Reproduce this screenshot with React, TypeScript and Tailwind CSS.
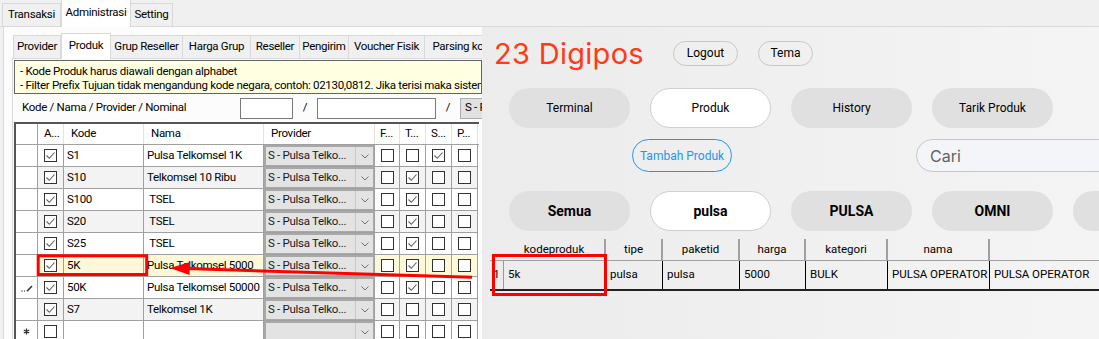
import React from "react";

type Row = {
  kode: string;
  nama: string;
  t?: boolean;
  s?: boolean;
  sel?: boolean;
  edit?: boolean;
};

const rows: Row[] = [
  { kode: "S1", nama: "Pulsa Telkomsel 1K", s: true },
  { kode: "S10", nama: "Telkomsel 10 Ribu", t: true },
  { kode: "S100", nama: " TSEL", t: true },
  { kode: "S20", nama: " TSEL", t: true },
  { kode: "S25", nama: " TSEL", t: true },
  { kode: "5K", nama: "Pulsa Telkomsel 5000", t: true, sel: true },
  { kode: "50K", nama: "Pulsa Telkomsel 50000", t: true, edit: true },
  { kode: "S7", nama: "Telkomsel 1K" },
];

const innerTabs = [
  { label: "Provider", w: "w-[48px]" },
  { label: "Produk", w: "w-[50px]", active: true },
  { label: "Grup Reseller", w: "w-[73px]" },
  { label: "Harga Grup", w: "w-[69px]" },
  { label: "Reseller", w: "w-[50px]" },
  { label: "Pengirim", w: "w-[50px]" },
  { label: "Voucher Fisik", w: "w-[77px]" },
  { label: "Parsing kode", w: "w-[80px]" },
];

function Check({ on }: { on?: boolean }) {
  return (
    <span className="w-[13px] h-[13px] border border-[#333] bg-white flex items-center justify-center">
      {on && (
        <svg width="11" height="11" viewBox="0 0 11 11">
          <path d="M1.5 5.5 L4.3 8.3 L9.5 2.5" fill="none" stroke="#606060" strokeWidth="1.1" />
        </svg>
      )}
    </span>
  );
}

function Chevron() {
  return (
    <svg width="8" height="5" viewBox="0 0 8 5">
      <path d="M0.5 0.5 L4 4 L7.5 0.5" fill="none" stroke="#707070" strokeWidth="1" />
    </svg>
  );
}

function ProviderCell({ text }: { text: string }) {
  return (
    <div className="w-[111px] h-full shrink-0 border-r border-b border-[#a0a0a0] bg-[#a8a8a8] p-[2px] pr-px pb-px">
      <div className="h-full flex bg-[#e3e3e3]">
        <span className="flex-1 pl-[2px] flex items-center whitespace-nowrap overflow-hidden text-[#1a1a1a]">{text}</span>
        <span className="w-[18px] border-l border-[#c8c8c8] flex items-center justify-center">
          <Chevron />
        </span>
      </div>
    </div>
  );
}

function GridRow({ row, i }: { row: Row; i: number }) {
  const bg = row.sel ? "bg-[#fdf9d8]" : i % 2 === 1 ? "bg-[#f3f3f3]" : "bg-white";
  const cell = `h-full shrink-0 border-r border-b border-[#a0a0a0] ${bg}`;
  return (
    <div className="flex h-[22px]">
      <div className="w-[22px] h-full shrink-0 border-r border-b border-[#a0a0a0] bg-white flex items-center justify-center">
        {row.edit && (
          <svg width="14" height="8" viewBox="0 0 14 8">
            <circle cx="2" cy="7" r="0.7" fill="#444" />
            <circle cx="4.5" cy="7" r="0.7" fill="#444" />
            <path d="M7 7.2 L12 2" stroke="#333" strokeWidth="1.6" />
          </svg>
        )}
      </div>
      <div className={`w-[26px] ${cell} flex items-center justify-center`}>
        <Check on />
      </div>
      <div className={`w-[80px] ${cell} ${row.edit ? "bg-white" : ""} pl-[3px] flex items-center`}>{row.kode}</div>
      <div className={`w-[120px] ${cell} pl-[3px] flex items-center whitespace-pre overflow-hidden`}>{row.nama}</div>
      <ProviderCell text="S - Pulsa Telko..." />
      <div className={`w-[25px] ${cell} flex items-center justify-center`}>
        <Check />
      </div>
      <div className={`w-[26px] ${cell} flex items-center justify-center`}>
        <Check on={row.t} />
      </div>
      <div className={`w-[26px] ${cell} flex items-center justify-center`}>
        <Check on={row.s} />
      </div>
      <div className={`w-[26px] ${cell} flex items-center justify-center`}>
        <Check />
      </div>
    </div>
  );
}

function LeftPanel() {
  return (
    <div className="w-[482px] h-full shrink-0 flex flex-col overflow-hidden text-[11.5px] tracking-[-0.3px] text-black font-[Roboto,sans-serif]">
      {/* outer tabs */}
      <div className="h-[27px] flex items-end pl-[2px] border-b border-[#d9d9d9] bg-[#f0f0f0]">
        <div className="w-[59px] h-[23px] border border-b-0 border-[#d9d9d9] flex items-center justify-center">Transaksi</div>
        <div className="w-[70px] h-[28px] -mb-px bg-white border border-b-0 border-[#d9d9d9] flex items-start pt-[4px] justify-center">Administrasi</div>
        <div className="w-[42px] h-[23px] border border-b-0 border-l-0 border-[#d9d9d9] flex items-center justify-center">Setting</div>
      </div>

      <div className="flex-1 ml-[3px] border-l border-[#d9d9d9] bg-[#fcfcfc] pt-[7px] pl-[8px]">
        {/* inner tabs */}
        <div className="h-[25px] flex items-end pl-px border-b border-[#d9d9d9]">
          {innerTabs.map((t) =>
            t.active ? (
              <div key={t.label} className={`${t.w} h-[26px] -mb-px shrink-0 bg-white border border-b-0 border-[#d9d9d9] flex items-start pt-[3px] justify-center`}>
                {t.label}
              </div>
            ) : (
              <div key={t.label} className={`${t.w} h-[23px] shrink-0 bg-[#f0f0f0] border border-b-0 border-[#d9d9d9] -ml-px first:ml-0 flex items-center justify-center whitespace-nowrap overflow-hidden`}>
                {t.label}
              </div>
            )
          )}
        </div>

        <div className="border-l border-[#d9d9d9] pl-px pt-px h-full">
          {/* info box */}
          <div className="h-[34px] border border-[#646464] bg-[#ffffe1] pl-[5px] pt-[3px] leading-[14px] whitespace-nowrap overflow-hidden">
            <div>- Kode Produk harus diawali dengan alphabet</div>
            <div>- Filter Prefix Tujuan tidak mengandung kode negara, contoh: 02130,0812. Jika terisi maka sistem akan</div>
          </div>

          {/* filter row */}
          <div className="mt-[3px] h-[22px] flex items-center overflow-hidden">
            <div className="w-[226px] shrink-0 pl-[8px] whitespace-nowrap">Kode / Nama / Provider / Nominal</div>
            <div className="w-[53px] h-[21px] shrink-0 bg-white border border-[#7a7a7a]" />
            <div className="w-[24px] shrink-0 text-center">/</div>
            <div className="w-[119px] h-[21px] shrink-0 bg-white border border-[#7a7a7a]" />
            <div className="w-[24px] shrink-0 text-center">/</div>
            <div className="w-[60px] h-[21px] shrink-0 bg-[#e1e1e1] border border-[#adadad] pl-[4px] flex items-center whitespace-nowrap">S - Pulsa</div>
          </div>

          {/* grid */}
          <div className="mt-[3px] w-[465px] border-l-2 border-t-2 border-[#555] bg-white">
            <div className="flex h-[21px] border-b border-[#a0a0a0]">
              <div className="w-[22px] shrink-0 border-r border-[#a0a0a0]" />
              <div className="w-[26px] shrink-0 border-r border-[#e3e3e3] pl-[6px] flex items-center">A...</div>
              <div className="w-[80px] shrink-0 border-r border-[#e3e3e3] pl-[7px] flex items-center">Kode</div>
              <div className="w-[120px] shrink-0 border-r border-[#e3e3e3] pl-[7px] flex items-center">Nama</div>
              <div className="w-[111px] shrink-0 border-r border-[#e3e3e3] pl-[7px] flex items-center">Provider</div>
              <div className="w-[25px] shrink-0 border-r border-[#e3e3e3] pl-[5px] flex items-center">F...</div>
              <div className="w-[26px] shrink-0 border-r border-[#e3e3e3] pl-[5px] flex items-center">T...</div>
              <div className="w-[26px] shrink-0 border-r border-[#e3e3e3] pl-[5px] flex items-center">S...</div>
              <div className="w-[26px] shrink-0 border-r border-[#e3e3e3] pl-[5px] flex items-center">P...</div>
            </div>
            {rows.map((r, i) => (
              <GridRow key={r.kode} row={r} i={i} />
            ))}
            {/* new row */}
            <div className="flex h-[22px]">
              <div className="w-[22px] shrink-0 border-r border-b border-[#a0a0a0] flex items-center justify-center">
                <svg width="7" height="7" viewBox="0 0 7 7">
                  <path d="M3.5 0.5 V6.5 M0.8 2 L6.2 5 M0.8 5 L6.2 2" stroke="#333" strokeWidth="1.3" />
                </svg>
              </div>
              <div className="w-[26px] shrink-0 border-r border-b border-[#a0a0a0] flex items-center justify-center">
                <Check />
              </div>
              <div className="w-[80px] shrink-0 border-r border-b border-[#a0a0a0]" />
              <div className="w-[120px] shrink-0 border-r border-b border-[#a0a0a0]" />
              <ProviderCell text="" />
              <div className="w-[25px] shrink-0 border-r border-b border-[#a0a0a0] flex items-center justify-center"><Check /></div>
              <div className="w-[26px] shrink-0 border-r border-b border-[#a0a0a0] flex items-center justify-center"><Check /></div>
              <div className="w-[26px] shrink-0 border-r border-b border-[#a0a0a0] flex items-center justify-center"><Check /></div>
              <div className="w-[26px] shrink-0 border-r border-b border-[#a0a0a0] flex items-center justify-center"><Check /></div>
            </div>
          </div>
        </div>
      </div>
    </div>
  );
}

const navButtons = [
  { label: "Terminal" },
  { label: "Produk", active: true },
  { label: "History" },
  { label: "Tarik Produk" },
];

const catButtons = [
  { label: "Semua" },
  { label: "pulsa", active: true },
  { label: "PULSA" },
  { label: "OMNI" },
  { label: "" },
];

const cols = [
  { label: "", w: "w-[14px]" },
  { label: "kodeproduk", w: "w-[102px]" },
  { label: "tipe", w: "w-[57px]" },
  { label: "paketid", w: "w-[77px]" },
  { label: "harga", w: "w-[66px]" },
  { label: "kategori", w: "w-[82px]" },
  { label: "nama", w: "w-[102px]" },
  { label: "", w: "w-[120px]" },
];

const cells = ["1", "5k", "pulsa", "pulsa", "5000", "BULK", "PULSA OPERATOR", "PULSA OPERATOR"];

function Pill({ label, active, bold }: { label: string; active?: boolean; bold?: boolean }) {
  return (
    <div
      className={`w-[121px] h-[40px] shrink-0 rounded-full flex items-center justify-center ${
        active ? "bg-white border border-[#cfcfcf]" : "bg-[#e0e0e0]"
      } ${bold ? "font-bold text-[14px]" : "text-[12px]"}`}
    >
      {label}
    </div>
  );
}

function RightPanel() {
  return (
    <div className="flex-1 h-full flex flex-col overflow-hidden font-[Roboto,sans-serif] text-black">
      <div className="h-[27px] shrink-0 bg-[#f0f0f0] border-b border-[#d9d9d9]" />
      <div className="flex-1 bg-gradient-to-r from-[#ececec] to-[#f4f4f4]">
        {/* title row */}
        <div className="mt-[13px] h-[26px] flex items-center">
          <div className="w-[191px] pl-[12px] text-[29px] leading-none text-[#ff3a14] font-[Inter,sans-serif] whitespace-nowrap tracking-[0.3px]">
            23 Digipos
          </div>
          <div className="w-[65px] h-[25px] rounded-full border border-[#c8c8c8] flex items-center justify-center text-[12px]">Logout</div>
          <div className="ml-[20px] w-[55px] h-[25px] rounded-full border border-[#c8c8c8] flex items-center justify-center text-[12px]">Tema</div>
        </div>

        {/* nav */}
        <div className="mt-[22px] pl-[27px] flex gap-[20px]">
          {navButtons.map((b) => (
            <Pill key={b.label} label={b.label} active={b.active} />
          ))}
        </div>

        {/* actions */}
        <div className="mt-[11px] h-[33px] flex">
          <div className="ml-[150px] w-[100px] h-[33px] shrink-0 rounded-full border-[1.5px] border-[#2196f3] text-[#2196f3] text-[12px] flex items-center justify-center">
            Tambah Produk
          </div>
          <div className="ml-[184px] w-[220px] h-[33px] shrink-0 rounded-full border border-[#c6c6c6] bg-[#f4f5f9] pl-[13px] flex items-center text-[16px] text-[#5f6368] font-[Inter,sans-serif]">
            Cari
          </div>
        </div>

        {/* categories */}
        <div className="mt-[19px] pl-[27px] flex gap-[20px]">
          {catButtons.map((b, i) => (
            <Pill key={i} label={b.label} active={b.active} bold />
          ))}
        </div>

        {/* table */}
        <div className="mt-[8px] ml-[8px] text-[11.5px]">
          <div className="flex h-[22px] border-b border-[#a0a0a0]">
            {cols.map((c, i) => (
              <div
                key={i}
                className={`${c.w} shrink-0 flex items-center justify-center ${i > 0 && i < cols.length - 1 ? "border-r-2 border-[#a0a0a0]" : ""}`}
              >
                {c.label}
              </div>
            ))}
          </div>
          <div className="flex h-[30px] border-b-2 border-[#222]">
            {cols.map((c, i) => (
              <div
                key={i}
                className={`${c.w} shrink-0 flex items-center whitespace-nowrap overflow-hidden ${
                  i === 0 ? "justify-center border-r border-[#999]" : "pl-[4px] border-r border-black"
                } ${i === cols.length - 1 ? "border-r-0" : ""}`}
              >
                {cells[i]}
              </div>
            ))}
          </div>
        </div>
      </div>
    </div>
  );
}

export default function App() {
  return (
    <div className="relative w-[1099px] h-[339px] overflow-hidden flex bg-[#f0f0f0]">
      <LeftPanel />
      <RightPanel />

      {/* annotations */}
      <svg className="absolute inset-0 pointer-events-none" width="1099" height="339" viewBox="0 0 1099 339">
        <rect x="38.2" y="255.8" width="108.5" height="18.7" fill="none" stroke="#ff0000" strokeWidth="3" />
        <rect x="493.5" y="255.5" width="112" height="39" fill="none" stroke="#ff0000" strokeWidth="3" />
        <line x1="186" y1="268.6" x2="472" y2="277.3" stroke="#ff0000" strokeWidth="3" />
        <polygon points="170,268 190,262 189.5,275" fill="#ff0000" />
      </svg>
    </div>
  );
}
